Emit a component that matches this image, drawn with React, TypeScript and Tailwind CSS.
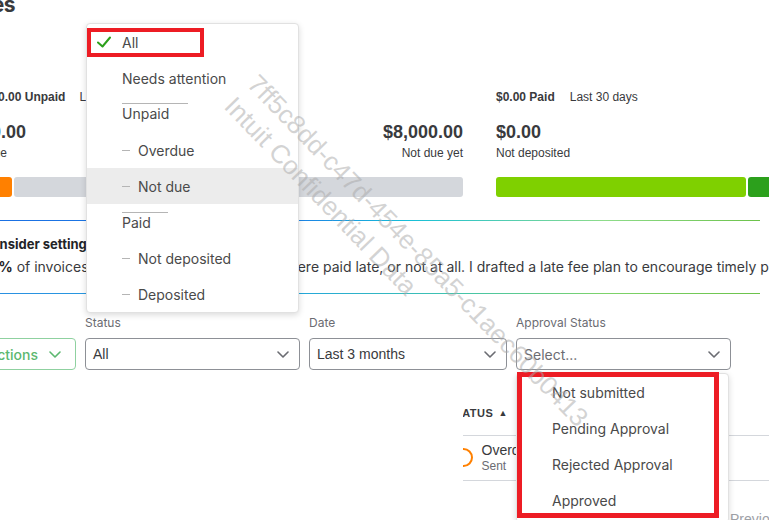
import React from 'react';

const Chevron = ({ className = '' }: { className?: string }) => (
  <svg viewBox="0 0 12 7" className={className} fill="none">
    <path d="M1 1l5 5 5-5" stroke="currentColor" strokeWidth="1.6" strokeLinecap="round" strokeLinejoin="round" />
  </svg>
);

const Select = ({ label, value, width, placeholder }: { label: string; value: string; width: string; placeholder?: boolean }) => (
  <div className={`${width} shrink-0 flex flex-col`}>
    <span className="font-['Inter',sans-serif] text-[12px] leading-[16px] text-[#6b6c72]">{label}</span>
    <div className="mt-[7px] flex h-[32px] items-center justify-between rounded-[4px] border border-[#8d9096] pl-[7px] pr-[10px]">
      {placeholder ? (
        <span className="font-['Inter',sans-serif] text-[14px] text-[#6b6c72]">{value}</span>
      ) : (
        <span className="text-[14px] text-[#393a3d]">{value}</span>
      )}
      <Chevron className="h-[7px] w-[12px] shrink-0 text-[#6b6c72]" />
    </div>
  </div>
);

type Row = { text: string; dash?: boolean; head?: number; active?: boolean; check?: boolean };

const statusRows: Row[] = [
  { text: 'All', check: true },
  { text: 'Needs attention' },
  { text: 'Unpaid', head: 66 },
  { text: 'Overdue', dash: true },
  { text: 'Not due', dash: true, active: true },
  { text: 'Paid', head: 46 },
  { text: 'Not deposited', dash: true },
  { text: 'Deposited', dash: true },
];

const approvalRows = ['Not submitted', 'Pending Approval', 'Rejected Approval', 'Approved'];

export default function App() {
  return (
    <div className="relative h-[520px] w-[769px] overflow-hidden bg-white font-['Liberation_Sans',Arial,sans-serif] text-[#393a3d]">
      {/* page title, scrolled off to the left */}
      <div className="h-[14px] overflow-hidden">
        <div className="-mt-[6px] flex w-[15px] justify-end">
          <h1 className="shrink-0 whitespace-nowrap font-['Inter',sans-serif] text-[21px] font-bold leading-none tracking-[-0.5px]">Invoices</h1>
        </div>
      </div>

      {/* money bar */}
      <div className="mt-[75px] flex">
        <div className="-ml-[39px] flex w-[502px] shrink-0 flex-col">
          <div className="ml-[7px] flex h-[16px] items-center whitespace-nowrap text-[12px]">
            <span className="font-bold">$8,100.00 Unpaid</span>
            <span className="ml-[14px]">Last 365 days</span>
          </div>
          <div className="mt-[16px] flex items-start justify-between">
            <div>
              <div className="text-[18px] font-bold leading-[22px]">$100.00</div>
              <div className="mt-[2px] text-[12px] leading-[16px]">Overdue</div>
            </div>
            <div className="text-right">
              <div className="text-[18px] font-bold leading-[22px]">$8,000.00</div>
              <div className="mt-[2px] text-[12px] leading-[16px]">Not due yet</div>
            </div>
          </div>
          <div className="mt-[16px] flex h-[20px] gap-[1.5px]">
            <div className="w-[51px] rounded-[3px] bg-[#ff8000]" />
            <div className="flex-1 rounded-[3px] bg-[#d4d7dc]" />
          </div>
        </div>
        <div className="ml-[33px] flex w-[300px] shrink-0 flex-col">
          <div className="flex h-[16px] items-center whitespace-nowrap text-[12px]">
            <span className="font-bold">$0.00 Paid</span>
            <span className="ml-[15px]">Last 30 days</span>
          </div>
          <div className="mt-[16px] text-[18px] font-bold leading-[22px]">$0.00</div>
          <div className="mt-[2px] text-[12px] leading-[16px]">Not deposited</div>
          <div className="mt-[16px] flex h-[20px] gap-[1.5px]">
            <div className="w-[250px] rounded-[3px] bg-[#7fd000]" />
            <div className="flex-1 rounded-[3px] bg-[#2ca01c]" />
          </div>
        </div>
      </div>

      {/* insight */}
      <div className="-ml-[18px] mt-[23px] w-[778px] font-['Inter',sans-serif]">
        <div className="h-px bg-[linear-gradient(90deg,#1a6fe3_0%,#1c80e6_40%,#17bfd8_55%,#8edc8a_80%,#6cc24a_100%)]" />
        <div className="mt-[13px] text-[13px] font-bold leading-[20px] text-[#232428]">Consider setting up late fees</div>
        <div className="-ml-[2px] mt-[3px] whitespace-nowrap text-[14px] leading-[20px] text-[#393a3d]">
          <b className="text-[#232428]">30%</b> of invoices you sent in the last 6 months were paid late, or not at all. I drafted a late fee plan to encourage timely payments.
        </div>
        <div className="mt-[16px] h-px bg-[linear-gradient(90deg,#2b8fe2_0%,#22a6dc_40%,#3fc3b0_60%,#7ed36a_80%,#6cc24a_100%)]" />
      </div>

      {/* filters */}
      <div className="mt-[21px] flex items-end gap-[9px]">
        <button className="-ml-[44px] flex h-[32px] w-[120px] shrink-0 items-center justify-end gap-[11px] rounded-[4px] border border-[#8fd1a0] pr-[14px] font-['Inter',sans-serif] text-[14px] font-medium text-[#5cb870]">
          <span className="shrink-0 whitespace-nowrap">Batch actions</span>
          <Chevron className="h-[7px] w-[12px] shrink-0 text-[#5cb870]" />
        </button>
        <Select label="Status" value="All" width="w-[215px]" />
        <Select label="Date" value="Last 3 months" width="w-[198px]" />
        <Select label="Approval Status" value="Select..." width="w-[215px]" placeholder />
      </div>

      {/* table, left part hidden */}
      <div className="mt-[35px] flex">
        <div className="w-[463px] shrink-0" />
        <div className="flex-1 overflow-hidden">
          <div className="h-[31px] border-b border-[#d4d7dc]">
            <div className="-ml-[15px] flex items-center whitespace-nowrap text-[11px] font-bold leading-[16px] tracking-[0.5px]">
              STATUS<span className="ml-[5px] text-[9px]">▲</span>
            </div>
          </div>
          <div className="flex h-[45px] items-start border-b border-[#d4d7dc]">
            <div className="-ml-[9.5px] mt-[12px] h-[19px] w-[19px] shrink-0 rounded-full border-2 border-[#ff8000]" />
            <div className="ml-[9px] mt-[6px] flex flex-col">
              <span className="text-[14px] leading-[16px]">Overdue</span>
              <span className="text-[12px] leading-[16px] text-[#6b6c72]">Sent</span>
            </div>
          </div>
          <div className="ml-[267px] mt-[30px] text-[14px] leading-[16px] text-[#9ea1a7]">Previous</div>
        </div>
      </div>

      {/* status menu */}
      <div className="absolute left-[86px] top-[23px] w-[213px] rounded-[4px] border border-[#e1e1e1] bg-white font-['Inter',sans-serif] text-[14px] text-[#4a4a4a] shadow-[0_2px_6px_rgba(0,0,0,0.15)]">
        {statusRows.map((r) =>
          r.head ? (
            <div key={r.text} className="flex h-[36px] flex-col pl-[35px]" style={{ paddingTop: r.head > 50 ? 7 : 8 }}>
              <div className="h-px bg-[#b5b5b5]" style={{ width: r.head }} />
              <span className="leading-[20px]">{r.text}</span>
            </div>
          ) : (
            <div key={r.text} className={`relative flex h-[36px] items-center pl-[35px] ${r.active ? 'bg-[#ececec]' : ''}`}>
              {r.check && (
                <svg viewBox="0 0 14 12" className="absolute left-[10px] top-[12px] h-[12px] w-[14px]" fill="none">
                  <path d="M1 6.5l4.5 4L13 1.5" stroke="#2ca01c" strokeWidth="2" strokeLinecap="round" strokeLinejoin="round" />
                </svg>
              )}
              {r.dash && <span className="mr-[8px] h-px w-[8px] bg-[#b5b5b5]" />}
              <span>{r.text}</span>
            </div>
          ),
        )}
      </div>

      {/* approval menu */}
      <div className="absolute left-[516px] top-[373px] h-[150px] w-[213px] rounded-[4px] border border-[#e1e1e1] bg-white font-['Inter',sans-serif] text-[14px] text-[#4a4a4a] shadow-[0_2px_6px_rgba(0,0,0,0.15)]">
        {approvalRows.map((t) => (
          <div key={t} className="flex h-[36px] items-center pl-[35px]">{t}</div>
        ))}
      </div>

      {/* annotation boxes */}
      <div className="absolute left-[87px] top-[28px] h-[29px] w-[117px] border-4 border-[#ed1c24]" />
      <div className="absolute left-[517px] top-[372px] h-[146px] w-[202px] border-[5px] border-[#ed1c24]" />

      {/* watermark */}
      <div className="pointer-events-none absolute left-[264px] top-[68px] origin-top-left rotate-[46deg] whitespace-nowrap text-[26px] leading-[32px] text-[#a8a8a8]/50">
        <div>7ff5c8dd-c47d-454e-85a5-c1aec60b0413</div>
        <div>Intuit Confidential Data</div>
      </div>
    </div>
  );
}
